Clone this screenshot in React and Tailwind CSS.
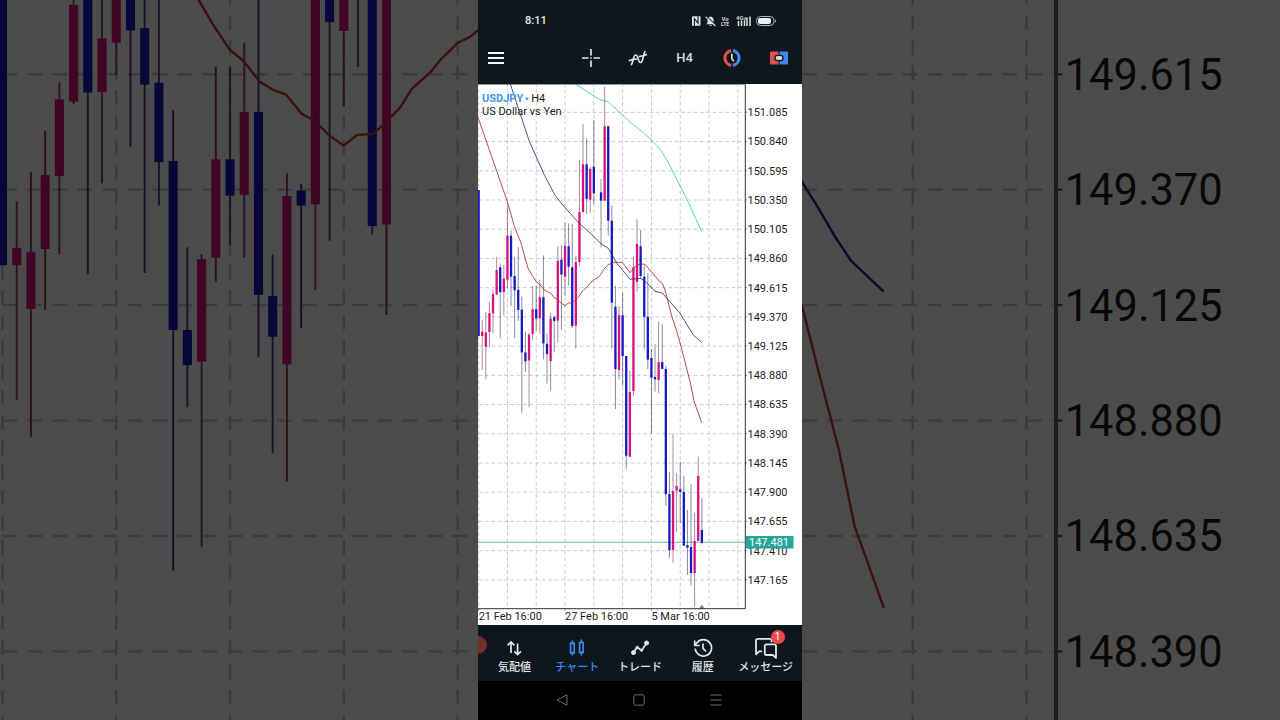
import React from "react";

const FONT = "font-['Roboto','Noto_Sans_CJK_JP',sans-serif]";

const STEP = 3.6;
const X0 = 0.63;
const AXIS_X = 267.3;
const AXIS_Y = 608.7;
const ROW_TOP = 112.35;
const ROW_STEP = 29.22;
const UP = "#d8127c";
const DOWN = "#1818c4";

const PRICES = [
  "151.085", "150.840", "150.595", "150.350", "150.105", "149.860",
  "149.615", "149.370", "149.125", "148.880", "148.635", "148.390",
  "148.145", "147.900", "147.655", "147.410", "147.165",
].map((text, i) => ({ text, y: ROW_TOP + i * ROW_STEP }));

const DATES = [
  { slot: 0, text: "21 Feb 16:00" },
  { slot: 24, text: "27 Feb 16:00" },
  { slot: 48, text: "5 Mar 16:00" },
];

// [slot, rising, wick top, body top, body bottom, wick bottom]
const CANDLES = [
  [0, 0, 190, 190, 336, 336],
  [1, 1, 319.9, 331.6, 336, 370.1],
  [2, 1, 312.4, 332.6, 347.1, 379.4],
  [3, 1, 302, 313.2, 331.9, 347.3],
  [4, 1, 289.8, 294, 313.4, 333.2],
  [5, 1, 256.7, 270.1, 294.6, 295.2],
  [6, 0, 263.5, 267.3, 292.3, 338.3],
  [7, 1, 265, 278.6, 292.2, 315.3],
  [8, 1, 206.3, 235.7, 279.7, 287.9],
  [9, 0, 230.7, 235.7, 276.6, 306],
  [10, 0, 257, 276, 290.3, 338],
  [11, 0, 247.3, 289.8, 309.9, 320.9],
  [12, 0, 296.7, 309.6, 352.4, 413.3],
  [13, 0, 331.5, 352.4, 361.3, 372],
  [14, 1, 333.2, 334.5, 360.4, 407.3],
  [15, 1, 285.8, 309.2, 334.1, 340.2],
  [16, 0, 285.9, 309.2, 318.4, 330.9],
  [17, 1, 279.7, 297.2, 318.2, 334.1],
  [18, 0, 255.5, 297.2, 343.5, 359.3],
  [19, 0, 333.3, 343.8, 354.1, 383.5],
  [20, 1, 312.7, 318.5, 361.1, 390.8],
  [21, 0, 315.5, 317.1, 320.9, 352],
  [22, 1, 246.3, 260.8, 320.6, 342.3],
  [23, 0, 245.3, 259.7, 274.5, 329.8],
  [24, 1, 222.3, 245.7, 276.7, 295.9],
  [25, 0, 223.3, 246.3, 266.7, 285.8],
  [26, 0, 224, 267.3, 326.1, 328.2],
  [27, 1, 255.7, 262, 325.7, 348.6],
  [28, 1, 160, 212, 262, 266],
  [29, 1, 124, 164.3, 212, 213.3],
  [30, 0, 138.3, 164.3, 199, 214],
  [31, 1, 167, 169, 199.7, 213.3],
  [32, 0, 120, 166.7, 193.3, 204],
  [34, 0, 179, 192.3, 200.7, 247.3],
  [35, 1, 86.7, 126.3, 200.7, 200.7],
  [36, 0, 126.3, 126.3, 220.7, 235.7],
  [37, 0, 205.7, 220.7, 302.7, 348.7],
  [38, 0, 285.7, 306.7, 369, 409],
  [39, 1, 306, 315.3, 370, 379.3],
  [40, 0, 292.7, 315.3, 356, 385.7],
  [41, 0, 356, 356, 455.7, 468.7],
  [42, 1, 371, 392, 456.7, 456.7],
  [43, 1, 256.7, 267.3, 391, 396],
  [44, 1, 219.3, 244, 282, 291.7],
  [45, 0, 230, 246.3, 276, 279],
  [46, 0, 265.7, 276.7, 317, 349.3],
  [47, 0, 273.3, 316.7, 359.7, 369],
  [48, 0, 349, 358, 377.7, 433.3],
  [49, 0, 344, 377, 379.3, 391.7],
  [50, 1, 321.7, 362, 380, 393.3],
  [51, 0, 324.3, 362, 369, 369],
  [52, 0, 365.7, 369, 494.3, 505.7],
  [53, 0, 471.7, 494, 550, 557.7],
  [54, 1, 434, 491, 550, 562.7],
  [55, 1, 473.3, 486, 490.7, 531.7],
  [56, 0, 461.7, 489.3, 492, 523.3],
  [57, 0, 476, 492, 545.7, 545.7],
  [58, 0, 510, 545, 547.7, 575],
  [59, 0, 484, 547, 573, 585.7],
  [60, 1, 512.7, 541, 573, 606.7],
  [61, 1, 456.7, 476, 541, 541],
  [62, 0, 498.3, 530, 542.7, 544.3],
];

const RED_LINE =
  "0,117.3 29,200.7 36.7,227.3 43,243 46.5,256 50.3,268.9 54,275.2 58.2,281.5 61.6,284.3 65.8,289.6 69.1,291.6 72.4,292.8 76.4,297.7 79.7,299.5 83.5,303.3 87,305.7 90.4,303 94.4,302.8 97.7,299.8 101.2,296.2 104.3,291.3 109,287.1 111.4,284.1 115.9,279.7 119,278.2 122,275.7 126.5,268.5 130.3,264.5 137,262.3 144,262.3 148,267 152,272.7 158,265.7 162.7,264 167,264.3 175.3,274 181,281 184.3,283.3 187,290 194,317 199,332 203.3,347.5 208,366 212.4,383 216.3,402 223.7,422.7";
const BLUE_LINE =
  "32.3,84 45,122.3 51.7,142.3 66.7,175.7 77.3,195.7 87.3,208 101.3,223.3 115,235.7 123.3,244 130.3,248.3 134.7,255.7 138.7,263 152,279.3 162.7,278.3 168.7,282.7 177,291.3 184.3,293 190.3,300 202,313.3 206.5,320.5 211.5,329 215.5,335 223.7,342.7";
const GREEN_LINE =
  "97.7,84 110,92.3 122.7,100 130,101.7 141.7,112.3 153.3,123 170,136.7 178,144.5 184,152 190,162 197,176 209.3,200 216,215 223.7,231.3";

const LIGHT_INK = {
  grid: "#b4b4b4", gridWidth: 0.7, axis: "#2c3336",
  rise: "#5a1038", fall: "#10104c", red: "#a81f1c", lineWidth: 0.8,
};
const DIM_INK = {
  grid: "#c6c6c6", gridWidth: 0.6, axis: "#5a6468",
  rise: "#8a4668", fall: "#4c4c78", red: "#c23a34", lineWidth: 0.6,
};

function PriceChart({ top, height, ink, fit, className, label }) {
  const prices = PRICES.filter((p) => p.y > top + 6 && p.y < top + height - 6);
  const dates = top + height > 620 ? DATES : [];
  const showQuote = top + height > 548;
  return (
    <svg viewBox={`0 ${top} 324 ${height}`} preserveAspectRatio={fit} className={className} role="img" aria-label={label}>
      <rect x="0" y="0" width="324" height="720" fill="#ffffff" />
      <g stroke={ink.grid} strokeWidth={ink.gridWidth} strokeDasharray="3.75 2.577">
        {PRICES.map((p) => (
          <line key={p.text} x1={X0} x2={AXIS_X} y1={p.y} y2={p.y} />
        ))}
        {Array.from({ length: 10 }, (_, k) => (
          <line key={k} x1={X0 + k * 8 * STEP} x2={X0 + k * 8 * STEP} y1="82.9" y2={AXIS_Y} />
        ))}
      </g>
      <line x1="0" x2={AXIS_X} y1="542.3" y2="542.3" stroke="#26a69a" strokeWidth="0.7" />
      {CANDLES.map(([n, up, hi, open, close, lo]) => {
        const x = X0 + n * STEP;
        return (
          <g key={n}>
            <line x1={x} x2={x} y1={hi} y2={lo} stroke={up ? ink.rise : ink.fall} strokeWidth="0.5" />
            <rect x={x - 1.15} y={open} width="2.3" height={close - open} fill={up ? UP : DOWN} />
          </g>
        );
      })}
      <g fill="none" strokeWidth={ink.lineWidth} strokeLinejoin="round">
        <polyline points={GREEN_LINE} stroke="#2ecc8f" />
        <polyline points={BLUE_LINE} stroke="#22228c" />
        <polyline points={RED_LINE} stroke={ink.red} />
      </g>
      <path d={`M220.8 ${AXIS_Y}l3-4 3 4z`} fill="#808080" />
      <g stroke={ink.axis} strokeWidth="1">
        <line x1="0" x2={AXIS_X} y1="84" y2="84" />
        <line x1={AXIS_X} x2={AXIS_X} y1="84" y2={AXIS_Y} />
        <line x1="0" x2={AXIS_X} y1={AXIS_Y} y2={AXIS_Y} />
        {PRICES.map((p) => (
          <line key={p.text} x1={AXIS_X} x2={AXIS_X + 1.6} y1={p.y} y2={p.y} strokeWidth="0.6" />
        ))}
        {DATES.map((d) => (
          <line key={d.slot} x1={X0 + d.slot * STEP} x2={X0 + d.slot * STEP} y1={AXIS_Y} y2={AXIS_Y + 2} strokeWidth="0.6" />
        ))}
      </g>
      <g fontSize="11" fill="#1c1c1c">
        {prices.map((p) => (
          <text key={p.text} x="269.5" y={p.y + 3.9}>{p.text}</text>
        ))}
        {dates.map((d) => (
          <text key={d.slot} x={X0 + d.slot * STEP} y="620">{d.text}</text>
        ))}
      </g>
      {showQuote && (
        <g>
          <rect x="268" y="536" width="47.5" height="12.5" fill="#26a69a" />
          <text x="271" y="546.2" fontSize="11" fill="#ffffff">147.481</text>
        </g>
      )}
    </svg>
  );
}

function StatusIcons() {
  return (
    <svg viewBox="0 0 86 14" className="h-[14px] w-[86px]" role="img" aria-label="NFC, muted, VoLTE, 4G+, battery">
      <path d="M1 3.500A1.300 1.300 0 012.300 2.200h7.200v8a1.500 1.500 0 01-1.500 1.500H1z" fill="#dfe3e6" />
      <path d="M3.400 11.700V4.700l3.600 4.400V2.200" fill="none" stroke="#0e171e" strokeWidth="1.100" />
      <path d="M19.500 2.600c-2 .4-3 1.800-3 3.800v2.600l-1.300 1.300h8.800l-1.400-1.300V6.400c0-2-1-3.400-3.100-3.800zM18.400 11h2.400c-.2 1.200-2.200 1.200-2.400 0z" fill="#dfe3e6" />
      <path d="M15.500 2.400l9.600 9" stroke="#0e171e" strokeWidth="1.300" />
      <path d="M14.600 2.600l9.800 9.400" stroke="#dfe3e6" strokeWidth="1.100" />
      <g fill="#d3d7da" fontWeight="700">
        <text x="30.500" y="6.800" fontSize="6">Vo</text>
        <text x="30" y="12" fontSize="5">LTE</text>
        <text x="45" y="5.800" fontSize="6">4G+</text>
      </g>
      <path d="M47.500 7v5M50.500 6.500V12M53.500 6v6M56 3.500V12M59 2.600V12" stroke="#dfe3e6" strokeWidth="1.500" />
      <rect x="65.500" y="2.500" width="17.500" height="9" rx="4" fill="none" stroke="#aeb4b8" strokeWidth="1" />
      <rect x="67" y="4" width="13" height="6" rx="2" fill="#eef0f2" />
      <path d="M84.300 5.500v3" stroke="#aeb4b8" strokeWidth="1" />
    </svg>
  );
}

const toolClass = "flex h-9 w-[47px] items-center justify-center";

function Toolbar() {
  return (
    <header className="flex h-11 items-start justify-between">
      <button type="button" aria-label="メニュー" className="flex size-9 items-center justify-center">
        <svg viewBox="0 0 18 14" className="h-[14px] w-[18px]" stroke="#f4f4f4" strokeWidth="2">
          <path d="M1 2h16M1 7h16M1 12h16" />
        </svg>
      </button>
      <div className="flex">
        <button type="button" aria-label="十字線" className={toolClass}>
          <svg viewBox="0 0 18 18" className="size-[18px]" stroke="#dfe3e6" strokeWidth="1.700">
            <path d="M9 0v6.500M9 11.500V18M0 9h6.500M11.500 9H18M8.200 9h1.600" />
          </svg>
        </button>
        <button type="button" aria-label="インディケータ" className={toolClass}>
          <svg viewBox="0 0 20 18" className="h-[18px] w-5" fill="none" stroke="#dfe3e6" strokeWidth="1.700">
            <path d="M3 16C5.500 14 5 6 7.800 6c3 0 1.800 7.500 4.600 7.500 3.200 0 2.400-9 5-11.500" />
            <path d="M.8 11.800l4.400-1.400 4-.4M10.800 7.600l4.200-.8 4-1.400" />
          </svg>
        </button>
        <button type="button" className={toolClass + " text-[13px] font-medium text-[#d5d9dc]"}>H4</button>
        <button type="button" aria-label="新規注文" className={toolClass}>
          <svg viewBox="0 0 18 18" className="size-[18px]" fill="none">
            <path d="M8.200 1.600a7.500 7.500 0 000 14.800" stroke="#dc5347" strokeWidth="3.100" />
            <path d="M9.800 1.600a7.500 7.500 0 010 14.800" stroke="#3f87ea" strokeWidth="3.100" />
            <path d="M8.800 4.800v4.600l2 3" stroke="#dfe3e6" strokeWidth="1.600" />
          </svg>
        </button>
        <button type="button" aria-label="ワンクリック取引" className={toolClass}>
          <svg viewBox="0 0 18 14" className="h-[14px] w-[18px]">
            <path d="M1 .5h7.600v13H1a1 1 0 01-1-1v-11a1 1 0 011-1z" fill="#dc5347" />
            <path d="M9.600.5H17a1 1 0 011 1v11a1 1 0 01-1 1H9.600z" fill="#3f87ea" />
            <rect x="4.300" y="3.700" width="9.400" height="6.600" rx="3.300" fill="#0e171e" />
            <rect x="5.600" y="5" width="6.800" height="4" rx="2" fill="#d3d7db" />
          </svg>
        </button>
      </div>
    </header>
  );
}

const TABS = [
  {
    label: "気配値",
    icon: (
      <g fill="none" stroke="#e2e5e8" strokeWidth="1.700">
        <path d="M7 15V4M3.600 7.400L7 4l3.400 3.400M13.600 5.500v11M10.400 13.300l3.200 3.200 3.400-3.200" />
      </g>
    ),
  },
  {
    label: "チャート",
    active: true,
    icon: (
      <g fill="none" stroke="#3f87ea" strokeWidth="1.700">
        <path d="M3.600 5.300h3.600v9.600H3.600zM5.400 2.500v2.800M5.400 14.900v2.600M12.600 4.500h3.600v9.800h-3.600zM14.400 1.500v3M14.400 14.300v3.200" />
      </g>
    ),
  },
  {
    label: "トレード",
    icon: (
      <g stroke="#e2e5e8" fill="#e2e5e8">
        <path d="M3.500 14.500l3.600-5.200 4.600 3.200 5-7.600" fill="none" strokeWidth="1.700" />
        <circle cx="3.500" cy="14.600" r="2" />
        <circle cx="7.300" cy="9.300" r="1.100" />
        <circle cx="11.600" cy="12.300" r="1.100" />
        <circle cx="16.600" cy="5" r="2" />
      </g>
    ),
  },
  {
    label: "履歴",
    icon: (
      <g fill="none" stroke="#e2e5e8" strokeWidth="1.700">
        <path d="M2.200 10.500a8.200 8.200 0 101.700-5.700L2.200 7M1.700 2.500v5h5" />
        <path d="M10 5.500v4.800l3 3.200" />
      </g>
    ),
  },
  {
    label: "メッセージ",
    badge: "1",
    icon: (
      <g fill="none" stroke="#e2e5e8" strokeWidth="1.800" strokeLinejoin="round">
        <path d="M6 13.300H3.200L0 16.300V2.600A1.800 1.800 0 011.800.8h12a1.800 1.800 0 011.800 1.800v1.600" />
        <path d="M10.600 6.300h7.600a1.800 1.800 0 011.800 1.800v11.700l-3.200-2.800h-6.200a1.800 1.800 0 01-1.800-1.800V8.100a1.800 1.800 0 011.800-1.800z" />
      </g>
    ),
  },
];

function TabBar() {
  return (
    <nav className="relative flex h-14 overflow-hidden bg-[#0e171e] px-[5px]">
      <span className="absolute top-[11px] -left-[9px] size-[18px] rounded-full bg-[#722f2c]" />
      {TABS.map((t) => (
        <button
          key={t.label}
          type="button"
          aria-current={t.active ? "page" : undefined}
          className={
            "relative flex flex-1 flex-col items-center gap-[2px] pt-[13px] text-[11px] leading-4 font-medium whitespace-nowrap " +
            (t.active ? "text-[#3f87ea]" : "text-[#e2e5e8]")
          }
        >
          <svg viewBox="0 0 20 20" className="size-5 overflow-visible" aria-hidden="true">{t.icon}</svg>
          <span>{t.label}</span>
          {t.badge && (
            <span className="absolute top-[5px] left-1/2 ml-[5px] flex size-[14px] items-center justify-center rounded-full bg-[#e84a4e] text-[10px] leading-none font-normal text-white">
              {t.badge}
            </span>
          )}
        </button>
      ))}
    </nav>
  );
}

const navClass = "flex h-[38px] w-[77px] items-center justify-center";

function SystemNav() {
  return (
    <nav className="flex h-[39px] items-start justify-center bg-black pr-[2px]">
      <button type="button" aria-label="戻る" className={navClass}>
        <svg viewBox="0 0 12 12" className="size-3" fill="none" stroke="#6c6c6c" strokeLinejoin="round">
          <path d="M11 .8v10.400L1 6z" />
        </svg>
      </button>
      <button type="button" aria-label="ホーム" className={navClass}>
        <svg viewBox="0 0 12 12" className="size-3" fill="none" stroke="#6c6c6c">
          <rect x=".8" y=".8" width="10.400" height="10.400" rx="2" />
        </svg>
      </button>
      <button type="button" aria-label="最近のアプリ" className={navClass}>
        <svg viewBox="0 0 12 12" className="size-3" fill="none" stroke="#6c6c6c">
          <path d="M.5 1h11M.5 6h11M.5 11h11" />
        </svg>
      </button>
    </nav>
  );
}

export default function App() {
  return (
    <div className={"relative min-h-screen overflow-hidden bg-[#4b4b4b] " + FONT}>
      <div className="absolute inset-0" aria-hidden="true">
        <PriceChart top={268.875} height={182.25} ink={DIM_INK} fit="xMidYMid slice" className="h-full w-full" label="USDJPY" />
        <div className="absolute inset-0 bg-black/70" />
      </div>

      <main className="relative mx-auto flex aspect-[9/20] h-screen flex-col bg-[#0e171e]">
        <div className="flex h-10 items-center justify-between pt-[2px] pr-[25px] pl-[47px]">
          <time className="text-[11px] font-medium text-[#eceef0]">8:11</time>
          <StatusIcons />
        </div>
        <Toolbar />
        <section className="relative min-h-0 flex-1 bg-white">
          <PriceChart top={84} height={541} ink={LIGHT_INK} fit="none" className="block h-full w-full" label="USDJPY H4" />
          <div className="absolute top-[8px] left-[4px] text-[11px] leading-[13px] text-[#1c1c1c]">
            <button type="button" className="flex items-center gap-[2px]">
              <span className="font-bold text-[#3f97ee]">USDJPY</span>
              <svg viewBox="0 0 4 4" className="size-1" aria-hidden="true">
                <path d="M0 .5h4L2 3.700z" fill="#3f97ee" />
              </svg>
              <span>H4</span>
            </button>
            <p>US Dollar vs Yen</p>
          </div>
        </section>
        <TabBar />
        <SystemNav />
      </main>
    </div>
  );
}
